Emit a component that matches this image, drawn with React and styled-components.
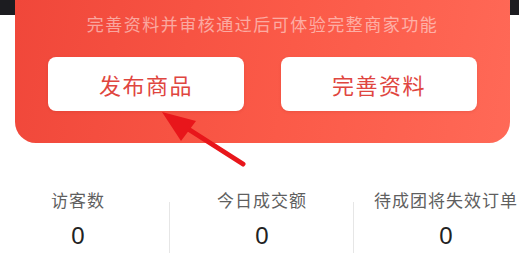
import styled, { createGlobalStyle } from 'styled-components';

const GlobalStyle = createGlobalStyle`
  html, body {
    margin: 0;
    padding: 0;
    overflow: hidden;
    background: #fff;
  }
  body {
    font-family: "Noto Sans CJK SC", "Noto Sans", sans-serif;
  }
`;

const stats = [
  { label: '访客数', value: '0' },
  { label: '今日成交额', value: '0' },
  { label: '待成团将失效订单', value: '0' },
];

export default function App() {
  return (
    <>
      <GlobalStyle />
      <Page>
        <Card>
          <Notice>完善资料并审核通过后可体验完整商家功能</Notice>
          <Buttons>
            <ActionButton>发布商品</ActionButton>
            <ActionButton>完善资料</ActionButton>
          </Buttons>
        </Card>
        <Stats>
          {stats.map((s, i) => (
            <Stat key={s.label} first={i === 0}>
              <StatLabel>{s.label}</StatLabel>
              <StatValue>{s.value}</StatValue>
            </Stat>
          ))}
        </Stats>
        <Arrow width="519" height="274" viewBox="0 0 519 274">
          <line x1="243" y1="164" x2="185" y2="127" stroke="#e8161b" strokeWidth="5" strokeLinecap="round" />
          <polygon points="162,112 196,121 181,141" fill="#e8161b" />
        </Arrow>
      </Page>
    </>
  );
}

const Page = styled.div`
  position: relative;
  width: 519px;
  height: 274px;
  background: linear-gradient(to bottom, #1c1c20 0, #1c1c20 15px, #fff 15px);
  overflow: hidden;
`;

const Card = styled.div`
  margin: 0 9px 0 15px;
  height: 143px;
  box-sizing: border-box;
  padding: 12px 33px 0;
  border-radius: 0 0 21px 21px;
  background: linear-gradient(100deg, #f0473a 0%, #fb5a48 55%, #ff6957 100%);
  display: flex;
  flex-direction: column;
  align-items: center;
`;

const Notice = styled.div`
  font-size: 17px;
  line-height: 24px;
  letter-spacing: 1.5px;
  color: rgba(255, 255, 255, 0.5);
  white-space: nowrap;
`;

const Buttons = styled.div`
  margin-top: 21px;
  display: flex;
  gap: 37px;
  width: 100%;
`;

const ActionButton = styled.div`
  flex: 1;
  height: 54px;
  border-radius: 8px;
  background: #fff;
  color: #df463f;
  font-size: 22px;
  letter-spacing: 1.5px;
  display: flex;
  align-items: center;
  justify-content: center;
  box-shadow: 0 1px 3px rgba(150, 30, 20, 0.15);
`;

const Stats = styled.div`
  display: flex;
  margin-left: -14px;
  margin-top: 45px;
`;

const Stat = styled.div`
  flex: 0 0 184px;
  position: relative;
  display: flex;
  flex-direction: column;
  align-items: center;
  gap: 10px;

  &::before {
    content: '';
    display: ${(p) => (p.first ? 'none' : 'block')};
    position: absolute;
    left: -1px;
    top: 14px;
    width: 1px;
    height: 51px;
    background: #e6e6e6;
  }
`;

const StatLabel = styled.div`
  font-size: 17px;
  line-height: 24px;
  letter-spacing: 1px;
  color: #5f5f5f;
  white-space: nowrap;
`;

const StatValue = styled.div`
  font-family: "Liberation Sans", Arial, sans-serif;
  font-size: 24px;
  line-height: 28px;
  color: #222;
`;

const Arrow = styled.svg`
  position: absolute;
  left: 0;
  top: 0;
  pointer-events: none;
`;
